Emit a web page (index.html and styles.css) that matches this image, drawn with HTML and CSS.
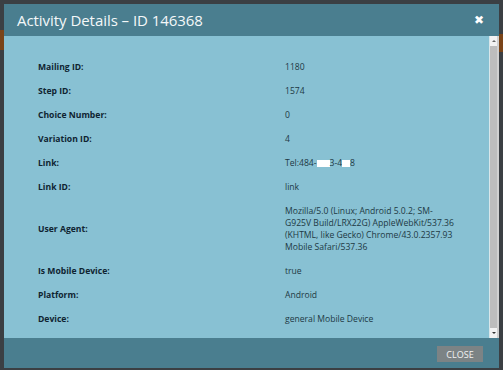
FILE: index.html
```html
<!DOCTYPE html>
<html>
<head>
<meta charset="utf-8">
<link rel="stylesheet" href="styles.css">
</head>
<body>
<div class="backdrop-strip left"></div>
<div class="backdrop-strip right"></div>
<div class="dialog">
  <div class="header">
    <span class="title">Activity Details – ID 146368</span>
    <span class="close-x">✖</span>
  </div>
  <div class="body">
    <div class="content">
      <div class="row"><div class="label">Mailing ID:</div><div class="value">1180</div></div>
      <div class="row"><div class="label">Step ID:</div><div class="value">1574</div></div>
      <div class="row"><div class="label">Choice Number:</div><div class="value">0</div></div>
      <div class="row"><div class="label">Variation ID:</div><div class="value">4</div></div>
      <div class="row"><div class="label">Link:</div><div class="value">Tel:484-<span class="redact r1"></span>3-4<span class="redact r2"></span>8</div></div>
      <div class="row"><div class="label">Link ID:</div><div class="value">link</div></div>
      <div class="row"><div class="label">User Agent:</div><div class="value">Mozilla/5.0 (Linux; Android 5.0.2; SM-<br>G925V Build/LRX22G) AppleWebKit/537.36<br>(KHTML, like Gecko) Chrome/43.0.2357.93<br>Mobile Safari/537.36</div></div>
      <div class="row"><div class="label">Is Mobile Device:</div><div class="value">true</div></div>
      <div class="row"><div class="label">Platform:</div><div class="value">Android</div></div>
      <div class="row"><div class="label">Device:</div><div class="value">general Mobile Device</div></div>
    </div>
    <div class="scrollbar">
      <div class="arrow up"></div>
      <div class="track"></div>
      <div class="arrow down"></div>
    </div>
  </div>
  <div class="footer">
    <button class="close-btn">CLOSE</button>
  </div>
</div>
</body>
</html>
```
FILE: styles.css
```css
html, body {
  margin: 0;
  height: 100%;
}
body {
  background: #3b3f43;
  padding: 4px 4px 2px 4px;
  box-sizing: border-box;
  font-family: "Open Sans", "DejaVu Sans", sans-serif;
  position: relative;
}
.backdrop-strip {
  position: absolute;
  width: 4px;
  background: #7a4418;
}
.backdrop-strip.left { left: 0; top: 30px; height: 20px; }
.backdrop-strip.right { right: 0; top: 34px; height: 18px; }
.dialog {
  width: 495px;
  height: 364px;
  display: flex;
  flex-direction: column;
  position: relative;
}
.header {
  height: 32px;
  background: #4a7e8f;
  display: flex;
  align-items: center;
  justify-content: space-between;
  padding: 0 15px 0 13px;
}
.title {
  color: #f4f8f9;
  font-size: 15px;
  letter-spacing: -0.05px;
  padding-bottom: 1px;
}
.close-x {
  color: #ffffff;
  font-size: 12px;
  font-family: "DejaVu Sans", sans-serif;
  font-weight: bold;
}
.body {
  flex: 1;
  display: flex;
  background: #88c1d3;
}
.content {
  flex: 1;
  padding: 19px 0 0 34px;
}
.row {
  display: grid;
  grid-template-columns: 247px 1fr;
  align-items: center;
  padding: 6px 0;
  font-size: 8.6px;
  line-height: 12px;
}
.label {
  font-weight: bold;
  color: #0f2431;
}
.value {
  color: #1d3944;
}
.redact {
  display: inline-block;
  background: #ffffff;
  height: 7px;
  vertical-align: -1px;
}
.redact.r1 { width: 13px; }
.redact.r2 { width: 8px; }
.scrollbar {
  width: 10px;
  display: flex;
  flex-direction: column;
  border-left: 1px solid #d8e6ea;
  background: #bdbdbd;
  border-right: 2px solid #d0d0d0;
  box-sizing: border-box;
}
.arrow {
  height: 10px;
  background: #f2f2f2;
  position: relative;
}
.arrow::after {
  content: "";
  position: absolute;
  left: 2px;
  border-left: 2px solid transparent;
  border-right: 2px solid transparent;
}
.arrow.up::after { top: 4px; border-bottom: 2px solid #666; }
.arrow.down::after { top: 4px; border-top: 2px solid #333; }
.track { flex: 1; }
.footer {
  height: 30px;
  background: #4a7e8f;
  display: flex;
  align-items: center;
  justify-content: flex-end;
  padding-right: 16px;
}
.close-btn {
  width: 46px;
  height: 16px;
  background: #7c8385;
  border: none;
  color: #f2f2f2;
  font-family: "Open Sans", sans-serif;
  font-size: 9px;
  padding: 0;
  margin-top: 2px;
}
```
